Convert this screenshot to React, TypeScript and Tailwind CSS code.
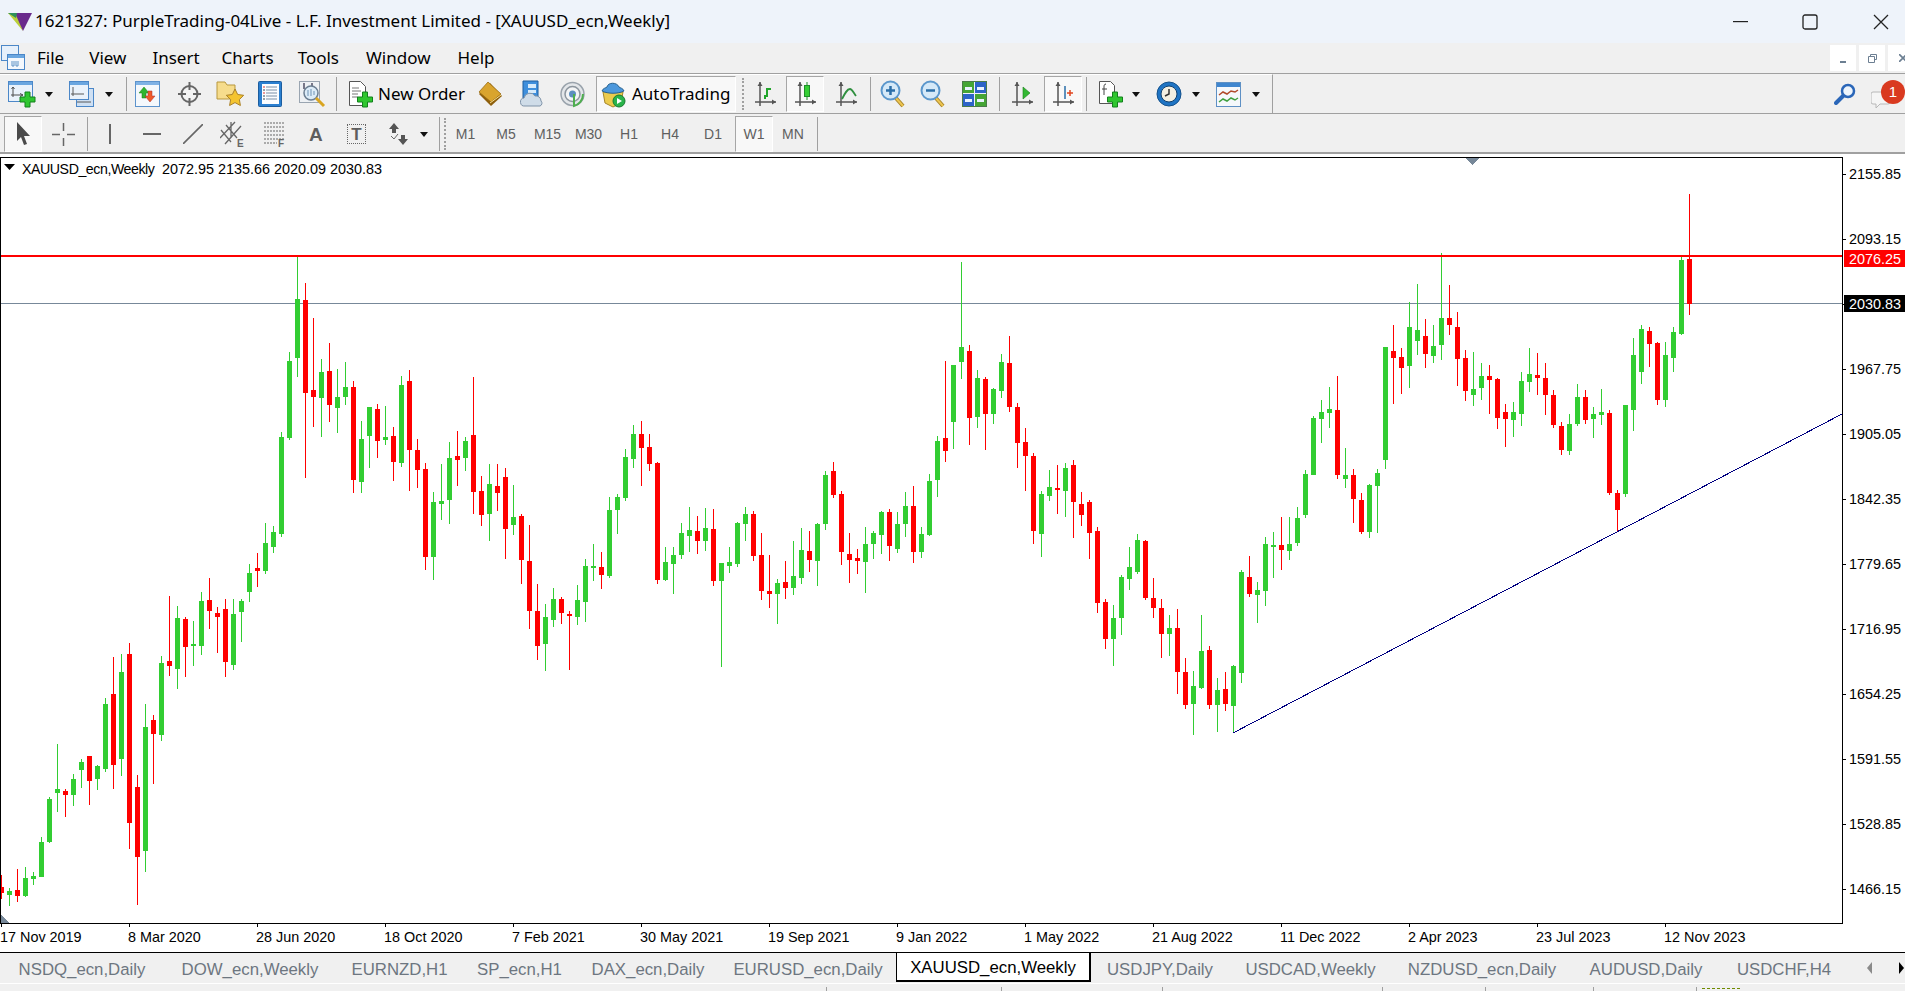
import React from 'react';

type Bar = [number, number, number, number, 'g' | 'r'];

// values are read off crops of the chart: page y = 230 + v / 3 once normalised below
const firstBars: Bar[] = [
    [1035, 1072, 1088, 1107, 'r'],
    [1075, 1083, 1095, 1128, 'g'], [1017, 1080, 1098, 1116, 'r'], [1011, 1044, 1098, 1101, 'g'], [1026, 1038, 1047, 1065, 'g'],
    [921, 936, 1041, 1041, 'g'], [801, 807, 936, 939, 'g'], [642, 777, 789, 846, 'g'], [777, 783, 795, 861, 'r'],
    [732, 747, 795, 828, 'g'], [687, 696, 720, 774, 'g'], [678, 678, 753, 825, 'r'], [705, 708, 747, 780, 'g'],
    [504, 522, 717, 726, 'g'], [381, 492, 705, 777, 'r'], [372, 426, 687, 738, 'g'], [339, 372, 879, 957, 'r'],
    [735, 771, 981, 1125, 'r'], [522, 591, 963, 1026, 'g'], [555, 570, 612, 762, 'r'], [378, 399, 615, 633, 'g'],
    [198, 393, 408, 438, 'r'], [228, 264, 417, 477, 'g'], [261, 267, 351, 441, 'r'], [273, 342, 348, 408, 'g'],
    [186, 213, 348, 375, 'g'], [144, 210, 243, 297, 'r'], [231, 249, 261, 369, 'r'], [207, 237, 396, 441, 'r'],
    [207, 252, 405, 420, 'g'], [207, 213, 246, 336, 'g'],
];
const midBars: Bar[] = [
    [1002, 1029, 1086, 1116, 'g'], [969, 1014, 1023, 1071, 'r'], [879, 939, 1023, 1032, 'g'], [888, 906, 951, 969, 'g'],
    [606, 621, 912, 921, 'g'], [366, 393, 624, 630, 'g'], [78, 207, 384, 441, 'g'], [159, 210, 489, 744, 'r'],
    [264, 480, 501, 591, 'r'], [387, 426, 504, 621, 'g'], [339, 423, 525, 576, 'r'], [417, 501, 534, 609, 'g'],
    [396, 471, 501, 525, 'g'], [453, 471, 750, 789, 'r'], [573, 627, 756, 789, 'g'], [531, 531, 618, 714, 'g'],
    [522, 537, 633, 684, 'r'], [528, 621, 630, 645, 'g'], [591, 618, 696, 753, 'r'], [438, 465, 699, 711, 'g'],
    [420, 453, 660, 783, 'r'], [627, 660, 720, 774, 'r'], [699, 717, 981, 1020, 'r'], [786, 816, 981, 1050, 'g'],
    [702, 813, 822, 870, 'g'], [636, 684, 810, 882, 'g'], [603, 678, 690, 768, 'r'], [621, 633, 684, 723, 'g'],
    [441, 615, 786, 852, 'r'], [738, 783, 855, 888, 'r'], [702, 762, 852, 933, 'g'], [702, 768, 789, 843, 'r'],
    [714, 741, 897, 987, 'r'], [765, 861, 885, 915, 'g'], [852, 858, 990, 1062, 'r'], [885, 993, 1143, 1197, 'r'],
    [1062, 1143, 1248, 1290, 'r'],
];
const secondBars: Bar[] = [
    [222, 261, 342, 423, 'g'], [174, 207, 270, 291, 'g'], [201, 207, 249, 282, 'r'], [243, 252, 255, 420, 'r'],
    [165, 210, 261, 285, 'g'], [87, 108, 216, 276, 'g'], [42, 108, 111, 153, 'g'], [66, 111, 135, 177, 'r'],
];
const lateBars: Bar[] = [
    [801, 840, 1038, 1044, 'g'], [792, 801, 840, 912, 'g'], [657, 681, 804, 813, 'g'], [585, 612, 687, 714, 'g'],
];
// this stretch came from a taller crop, scale 2.958 instead of 3
const restBars: Bar[] = [
    [565, 604, 645, 757, 'r'], [604, 642, 692, 714, 'r'], [686, 689, 1035, 1047, 'r'], [938, 982, 1035, 1038, 'g'],
    [938, 962, 988, 1077, 'g'], [867, 896, 962, 974, 'g'], [820, 888, 905, 953, 'g'], [846, 891, 920, 959, 'r'],
    [822, 882, 920, 950, 'g'], [825, 885, 1038, 1053, 'r'], [985, 985, 1038, 1293, 'g'], [938, 982, 994, 1015, 'g'],
    [864, 867, 988, 997, 'g'], [820, 840, 870, 920, 'g'], [831, 840, 964, 979, 'r'], [896, 962, 1068, 1095, 'r'],
    [962, 1068, 1077, 1118, 'r'], [1033, 1044, 1077, 1166, 'g'], [979, 1041, 1059, 1092, 'r'], [920, 1024, 1059, 1080, 'g'],
    [882, 947, 1030, 1047, 'g'], [891, 950, 976, 1012, 'r'], [867, 870, 979, 1053, 'g'], [713, 725, 870, 888, 'g'],
    [686, 713, 784, 793, 'r'], [772, 781, 953, 991, 'r'], [896, 959, 976, 1044, 'r'], [944, 970, 979, 1018, 'r'],
    [879, 929, 982, 1074, 'g'], [891, 896, 929, 973, 'g'], [831, 834, 902, 959, 'g'], [825, 834, 935, 979, 'r'],
    [834, 870, 944, 956, 'g'], [775, 817, 870, 908, 'g'], [757, 817, 953, 985, 'r'], [879, 899, 953, 970, 'g'],
    [722, 743, 902, 905, 'g'], [609, 624, 740, 790, 'g'], [388, 615, 654, 686, 'r'], [399, 399, 568, 648, 'g'],
    [95, 346, 391, 441, 'g'], [340, 358, 556, 636, 'r'], [414, 438, 553, 586, 'g'], [435, 441, 544, 651, 'r'],
    [468, 470, 544, 574, 'g'], [367, 391, 476, 497, 'g'], [314, 393, 524, 538, 'r'], [513, 524, 630, 704, 'r'],
    [586, 627, 669, 772, 'r'], [660, 669, 891, 929, 'r'], [772, 781, 899, 967, 'g'], [710, 760, 787, 802, 'g'],
    [695, 763, 769, 840, 'r'], [689, 704, 772, 849, 'g'], [680, 695, 805, 911, 'r'], [775, 811, 843, 876, 'r'],
    [799, 805, 896, 973, 'r'], [879, 891, 1104, 1133, 'r'], [1092, 1101, 1210, 1240, 'r'], [1109, 1148, 1210, 1290, 'g'],
    [1021, 1027, 1148, 1198, 'g'], [938, 997, 1033, 1065, 'g'], [899, 917, 1012, 1018, 'g'], [917, 920, 1089, 1095, 'r'],
    [1030, 1089, 1118, 1148, 'r'], [1092, 1118, 1195, 1266, 'r'], [1139, 1177, 1195, 1260, 'g'], [1121, 1177, 1308, 1373, 'r'],
    [1266, 1308, 1405, 1417, 'r'], [1305, 1349, 1402, 1493, 'g'], [1139, 1246, 1355, 1358, 'g'], [1231, 1243, 1405, 1417, 'r'],
    [1325, 1361, 1405, 1485, 'g'], [1308, 1358, 1402, 1423, 'r'], [1287, 1290, 1408, 1487, 'g'], [1006, 1012, 1311, 1340, 'g'],
    [964, 1027, 1077, 1086, 'r'], [1041, 1065, 1080, 1163, 'g'], [908, 929, 1068, 1112, 'g'], [893, 932, 938, 1030, 'g'],
    [849, 932, 947, 1006, 'r'], [849, 929, 950, 976, 'g'], [820, 852, 926, 935, 'g'], [710, 722, 843, 852, 'g'],
    [550, 556, 725, 725, 'g'], [503, 538, 559, 630, 'g'], [464, 530, 541, 586, 'g'], [432, 533, 725, 737, 'r'],
    [645, 725, 737, 763, 'g'], [707, 725, 796, 867, 'r'], [778, 799, 893, 899, 'r'], [751, 754, 893, 911, 'g'],
    [707, 719, 757, 896, 'g'], [346, 346, 680, 707, 'g'], [281, 358, 379, 515, 'r'], [349, 376, 408, 485, 'r'],
    [213, 287, 402, 467, 'g'], [160, 296, 328, 370, 'g'], [263, 314, 367, 408, 'r'], [281, 343, 373, 393, 'g'],
    [68, 260, 340, 385, 'g'], [163, 260, 281, 311, 'r'], [243, 287, 382, 462, 'r'], [355, 379, 476, 506, 'r'],
    [361, 470, 488, 521, 'g'], [393, 432, 467, 503, 'g'], [399, 432, 444, 544, 'r'], [438, 441, 556, 589, 'r'],
    [515, 538, 559, 642, 'r'], [509, 538, 562, 612, 'g'], [420, 447, 544, 580, 'g'], [349, 426, 450, 479, 'g'],
    [364, 429, 438, 488, 'r'], [393, 438, 488, 547, 'r'], [473, 488, 577, 586, 'r'], [568, 580, 651, 666, 'r'],
    [544, 574, 654, 666, 'g'], [456, 494, 574, 580, 'g'], [473, 494, 562, 574, 'r'], [524, 544, 559, 615, 'g'],
    [470, 538, 547, 577, 'g'], [533, 541, 778, 784, 'r'], [769, 778, 828, 891, 'r'], [518, 518, 781, 790, 'g'],
    [320, 370, 533, 595, 'g'], [281, 293, 420, 456, 'g'], [287, 299, 337, 405, 'r'], [331, 334, 503, 518, 'r'],
    [331, 370, 503, 524, 'g'], [287, 302, 379, 420, 'g'], [80, 89, 308, 311, 'g'], [-107, 86, 218, 251, 'r'],
];

const shift = (b: Bar): Bar => [b[0] + 900, b[1] + 900, b[2] + 900, b[3] + 900, b[4]];
const rescale = (b: Bar): Bar => [(b[0] * 3) / 2.958, (b[1] * 3) / 2.958, (b[2] * 3) / 2.958, (b[3] * 3) / 2.958, b[4]];
const bars: Bar[] = [...firstBars.map(shift), ...midBars, ...secondBars.map(shift), ...lateBars, ...restBars.map(rescale)];
const py = (v: number) => Math.round(230 + v / 3);

const prices = ['2155.85', '2093.15', '2030.45', '1967.75', '1905.05', '1842.35', '1779.65', '1716.95', '1654.25', '1591.55', '1528.85', '1466.15'];
const dates = ['17 Nov 2019', '8 Mar 2020', '28 Jun 2020', '18 Oct 2020', '7 Feb 2021', '30 May 2021', '19 Sep 2021', '9 Jan 2022', '1 May 2022', '21 Aug 2022', '11 Dec 2022', '2 Apr 2023', '23 Jul 2023', '12 Nov 2023'];

type IconProps = { className?: string };

function Arrow({ className = '' }: IconProps) {
    return (
        <svg width="8" height="5" viewBox="0 0 8 5" className={`shrink-0 ${className}`}>
            <path d="M0 0h8L4 5z" fill="#111" />
        </svg>
    );
}

function Sep({ className = '' }: IconProps) {
    return <div className={`h-[34px] w-px shrink-0 bg-[#a0a0a0] ${className}`} />;
}

function Plus({ x, y }: { x: number; y: number }) {
    return (
        <path
            transform={`translate(${x} ${y})`}
            d="M5 0h5v5h5v5h-5v5H5v-5H0V5h5z"
            fill="#2fc62f"
            stroke="#12801c"
            strokeWidth="1"
        />
    );
}

function NewChartIcon({ className = '' }: IconProps) {
    return (
        <svg width="28" height="28" viewBox="0 0 28 28" className={`shrink-0 ${className}`}>
            <rect x="0.500" y="1.500" width="24" height="20" fill="#eaf2fb" stroke="#4b87c8" />
            <rect x="1" y="2" width="23" height="3" fill="#6aa6e0" />
            <path d="M5 7v10M3 15h12M3.500 9 5 7l1.500 2M12 13.500 15 15l-3 1.500" stroke="#4f4f4f" fill="none" />
            <Plus x={12} y={12} />
        </svg>
    );
}

function ProfilesIcon({ className = '' }: IconProps) {
    return (
        <svg width="25" height="28" viewBox="0 0 25 28" className={`shrink-0 ${className}`}>
            <rect x="7.500" y="8.500" width="17" height="18" fill="#cfe0f3" stroke="#4b87c8" />
            <rect x="0.500" y="1.500" width="19" height="18" fill="#eaf2fb" stroke="#4b87c8" />
            <rect x="1" y="2" width="18" height="3" fill="#6aa6e0" />
            <path d="M4 7v9M2 14h13M8 22h14" stroke="#5a5a5a" fill="none" />
        </svg>
    );
}

function MarketWatchIcon({ className = '' }: IconProps) {
    return (
        <svg width="25" height="28" viewBox="0 0 25 28" className={`shrink-0 ${className}`}>
            <rect x="0.500" y="1.500" width="24" height="25" fill="#f4f8fc" stroke="#5c93cc" />
            <rect x="1" y="2" width="23" height="3" fill="#7fb2e5" />
            <path d="M9 7l5 6h-3v5H7v-5H4z" fill="#2fb52f" stroke="#1a7d1a" strokeWidth="0.500" />
            <path d="M15 22l-5-6h3v-5h4v5h3z" fill="#ef5a2a" stroke="#a33" strokeWidth="0.500" />
        </svg>
    );
}

function NavigatorIcon({ className = '' }: IconProps) {
    return (
        <svg width="23" height="26" viewBox="0 0 23 26" className={`shrink-0 ${className}`}>
            <circle cx="11.500" cy="13" r="8" fill="#f4f4f4" stroke="#666" strokeWidth="2" />
            <path d="M11.500 1v8M11.500 17v8M0 13h8M15 13h8" stroke="#666" strokeWidth="2" />
        </svg>
    );
}

function FavoritesIcon({ className = '' }: IconProps) {
    return (
        <svg width="28" height="28" viewBox="0 0 28 28" className={`shrink-0 ${className}`}>
            <path d="M1 2h8l2 3h8v14H1z" fill="#f6dc8c" stroke="#b8973d" />
            <path d="M19 9l2.700 5.500 6 .8-4.300 4.200 1 6-5.400-2.900-5.400 2.900 1-6-4.300-4.200 6-.8z" fill="#f4c430" stroke="#a9812a" />
        </svg>
    );
}

function TerminalIcon({ className = '' }: IconProps) {
    return (
        <svg width="24" height="28" viewBox="0 0 24 28" className={`shrink-0 ${className}`}>
            <rect x="0.500" y="1.500" width="23" height="25" rx="1" fill="#2a7fd0" stroke="#1c5d9e" />
            <rect x="4" y="4" width="17" height="20" fill="#fbfdff" />
            <path d="M8 7h11M8 10h11M8 13h11M8 16h11M8 19h11" stroke="#7b8fa6" />
            <path d="M5 7h2M5 13h2" stroke="#d33" />
            <path d="M5 10h2M5 16h2M5 19h2" stroke="#345" />
        </svg>
    );
}

function TesterIcon({ className = '' }: IconProps) {
    return (
        <svg width="28" height="28" viewBox="0 0 28 28" className={`shrink-0 ${className}`}>
            <rect x="0.500" y="1.500" width="20" height="21" fill="#eef1f4" stroke="#9aa5b1" />
            <path d="M5 3v6M13 3v6" stroke="#778" strokeWidth="2" />
            <circle cx="12" cy="13" r="7" fill="#dcecf8" stroke="#6c7f92" strokeWidth="1.500" />
            <path d="M9 10v6M12 9v7M15 11v4" stroke="#6f93b5" />
            <path d="M17 18l8 8" stroke="#d9a520" strokeWidth="3" />
        </svg>
    );
}

function OrderIcon({ className = '' }: IconProps) {
    return (
        <svg width="25" height="28" viewBox="0 0 25 28" className={`shrink-0 ${className}`}>
            <path d="M1.500 1.500h11l5 5v19h-16z" fill="#fff" stroke="#555" />
            <path d="M4 8h7M4 11h9M4 14h6M4 17h6" stroke="#777" />
            <Plus x={9.500} y={12} />
        </svg>
    );
}

function BookIcon({ className = '' }: IconProps) {
    return (
        <svg width="25" height="26" viewBox="0 0 25 26" className={`shrink-0 ${className}`}>
            <path d="M1 13 12 2l12 13-11 10z" fill="#8d5f0c" />
            <path d="M1 11 10 1l13 12-10 8z" fill="#d9a42e" stroke="#9a6d14" strokeWidth="0.800" />
            <path d="M12 22 23 14" stroke="#f6dd92" />
        </svg>
    );
}

function CloudMarketIcon({ className = '' }: IconProps) {
    return (
        <svg width="25" height="28" viewBox="0 0 25 28" className={`shrink-0 ${className}`}>
            <path d="M4 1h15v17H4z" fill="#3f8fdc" stroke="#1f5f9f" />
            <path d="M9 4h8v4H9zM9 10h8v3H9z" fill="#d7ebfb" />
            <path d="M6 26a4 4 0 0 1-1-8 6 6 0 0 1 11-2 5 5 0 0 1 6 5 3 3 0 0 1-1 5z" fill="#cfdce8" stroke="#7f93a8" />
        </svg>
    );
}

function SignalIcon({ className = '' }: IconProps) {
    return (
        <svg width="25" height="28" viewBox="0 0 25 28" className={`shrink-0 ${className}`}>
            <circle cx="12.500" cy="14" r="11.500" fill="#e3e6e9" stroke="#9aa3ac" strokeWidth="1.500" />
            <circle cx="12.500" cy="14" r="7.500" fill="#f3f4f5" stroke="#8c959e" strokeWidth="1.500" />
            <circle cx="12.500" cy="14" r="3.500" fill="#5d8fc0" />
            <path d="M14 14v12c5-1 9-6 9-12" fill="none" stroke="#4fae4f" strokeWidth="2" />
        </svg>
    );
}

function RobotIcon({ className = '' }: IconProps) {
    return (
        <svg width="26" height="28" viewBox="0 0 26 28" className={`shrink-0 ${className}`}>
            <path d="M3 12h20l-2 11-8 4-8-4z" fill="#eccb4d" stroke="#a5862a" />
            <path d="M2 11c1-3 4-3 5-4 1-5 10-5 12 0 1 1 4 1 5 4-6 3-16 3-22 0z" fill="#4d98dc" stroke="#28628f" />
            <circle cx="19" cy="21" r="6" fill="#29b44a" stroke="#1a7a30" />
            <path d="M17 18l5 3-5 3z" fill="#fff" />
        </svg>
    );
}

function ChartIcon({ className = '', children }: IconProps & { children?: React.ReactNode }) {
    return (
        <svg width="21" height="26" viewBox="0 0 21 26" className={`shrink-0 ${className}`}>
            <path d="M5 1v24M0 21h21" stroke="#555" strokeWidth="1.500" fill="none" />
            <path d="M2.500 5 5 1l2.500 4z M17 18.500 21 21l-4 2.500z" fill="#555" />
            {children}
        </svg>
    );
}

function Magnifier({ className = '', minus }: IconProps & { minus?: boolean }) {
    return (
        <svg width="26" height="28" viewBox="0 0 26 28" className={`shrink-0 ${className}`}>
            <path d="M15 17l8 9" stroke="#a8842a" strokeWidth="4" />
            <path d="M15 17l8 9" stroke="#edc550" strokeWidth="2" />
            <circle cx="10.500" cy="10.500" r="9" fill="#d5e9f8" stroke="#5b97cc" strokeWidth="2" />
            <path d={minus ? 'M6 10.500h9' : 'M6 10.500h9M10.500 6v9'} stroke="#2a6ea8" strokeWidth="2.500" />
        </svg>
    );
}

function TileIcon({ className = '' }: IconProps) {
    return (
        <svg width="25" height="28" viewBox="0 0 25 28" className={`shrink-0 ${className}`}>
            <rect x="0.500" y="1.500" width="24" height="25" fill="#eef" stroke="#4a7c4a" />
            <rect x="1" y="2" width="11" height="11" fill="#45a535" />
            <rect x="13" y="2" width="11" height="11" fill="#2c64c8" />
            <rect x="1" y="14" width="11" height="12" fill="#2c64c8" />
            <rect x="13" y="14" width="11" height="12" fill="#45a535" />
            <path d="M3 7h7v3H3zM15 7h7v3h-7zM3 19h7v3H3zM15 19h7v3h-7z" fill="#e9f2ff" />
        </svg>
    );
}

function IndicatorIcon({ className = '' }: IconProps) {
    return (
        <svg width="25" height="28" viewBox="0 0 25 28" className={`shrink-0 ${className}`}>
            <path d="M1.500 1.500h11l4 4v18h-15z" fill="#fff" stroke="#555" />
            <path d="M8 4c-2 0-2 2-2 3v8M4 9h5" stroke="#444" fill="none" />
            <Plus x={9.500} y={12} />
        </svg>
    );
}

function ClockIcon({ className = '' }: IconProps) {
    return (
        <svg width="26" height="28" viewBox="0 0 26 28" className={`shrink-0 ${className}`}>
            <circle cx="13" cy="14" r="12" fill="#1f74c4" stroke="#15528c" />
            <circle cx="13" cy="14" r="8" fill="#f3efe2" stroke="#0e3f6e" />
            <path d="M13 9v5l-4 2" stroke="#333" strokeWidth="1.500" fill="none" />
        </svg>
    );
}

function TemplateIcon({ className = '' }: IconProps) {
    return (
        <svg width="25" height="28" viewBox="0 0 25 28" className={`shrink-0 ${className}`}>
            <rect x="0.500" y="2.500" width="24" height="24" fill="#f5f8fb" stroke="#5e90c4" />
            <rect x="1" y="3" width="23" height="4" fill="#3f86cf" />
            <path d="M3 15l4-3 4 2 4-3 4 1 3-2" stroke="#b04a2a" fill="none" strokeWidth="1.500" />
            <path d="M3 22l4-3 4 2 4-3 4 2 3-2" stroke="#3fa03f" fill="none" strokeWidth="1.500" />
        </svg>
    );
}

function Chart() {
    return (
        <svg width="1841" height="765" viewBox="1 158 1841 765" shapeRendering="crispEdges" className="block">
            <rect x="1" y="303" width="1841" height="1" fill="#778899" />
            {bars.map((b, i) => {
                const [hi, top, bot, lo, c] = b;
                const fill = c === 'g' ? '#32cd32' : '#ff0000';
                const x = 1 + 8 * i;
                const y1 = py(top);
                const y2 = py(bot);
                return (
                    <g key={i} fill={fill}>
                        <rect x={x} y={py(hi)} width="1" height={py(lo) - py(hi)} />
                        <rect x={x - 2} y={y1} width="5" height={Math.max(y2 - y1, 2)} />
                    </g>
                );
            })}
            <rect x="1" y="255" width="1841" height="2" fill="#ff0000" />
            <line x1="1233" y1="733" x2="1842" y2="414" stroke="#000080" strokeWidth="1" />
            <path d="M1465 158h14l-7 7z" fill="#778899" />
            <path d="M1 915l8 8H1z" fill="#778899" />
            <path d="M4 164h11l-5.500 6z" fill="#000" shapeRendering="auto" />
        </svg>
    );
}

const tabs = [
    { label: 'NSDQ_ecn,Daily', w: 'w-[164px]' },
    { label: 'DOW_ecn,Weekly', w: 'w-[172px]' },
    { label: 'EURNZD,H1', w: 'w-[127px]' },
    { label: 'SP_ecn,H1', w: 'w-[113px]' },
    { label: 'DAX_ecn,Daily', w: 'w-[144px]' },
    { label: 'EURUSD_ecn,Daily', w: 'w-[176px]' },
    { label: 'XAUUSD_ecn,Weekly', w: 'w-[195px]', active: true },
    { label: 'USDJPY,Daily', w: 'w-[138px]' },
    { label: 'USDCAD,Weekly', w: 'w-[163px]' },
    { label: 'NZDUSD_ecn,Daily', w: 'w-[180px]' },
    { label: 'AUDUSD,Daily', w: 'w-[148px]' },
    { label: 'USDCHF,H4', w: 'w-[128px]' },
];

export default function App() {
    return (
        <div className="flex h-screen w-full flex-col overflow-hidden bg-[#f0f0f0] font-['Noto_Sans',sans-serif] text-black">
            {/* Title bar */}
            <div className="flex h-[43px] shrink-0 items-center bg-[#eef3fa]">
                <svg width="24" height="20" viewBox="0 0 24 20" className="ml-[8px] shrink-0">
                    <path d="M0 1h9l6 18z" fill="#b9cf3a" />
                    <path d="M7 1h17l-9 18z" fill="#6a2a8c" />
                    <path d="M0 1h9l-1 5z" fill="#2f8f5a" />
                </svg>
                <span className="ml-[3px] mb-[2px] text-[17px] leading-none">1621327: PurpleTrading-04Live - L.F. Investment Limited - [XAUUSD_ecn,Weekly]</span>
                <svg width="15" height="2" viewBox="0 0 15 2" className="ml-auto">
                    <rect width="15" height="1.200" fill="#222" />
                </svg>
                <svg width="16" height="16" viewBox="0 0 16 16" className="ml-[54px]">
                    <rect x="1" y="1" width="14" height="14" rx="2" fill="none" stroke="#222" strokeWidth="1.300" />
                </svg>
                <svg width="16" height="16" viewBox="0 0 16 16" className="ml-[55px] mr-[16px]">
                    <path d="M1 1l14 14M15 1 1 15" stroke="#222" strokeWidth="1.300" />
                </svg>
            </div>

            {/* Menu bar */}
            <div className="flex h-[30px] shrink-0 items-center">
                <svg width="24" height="26" viewBox="0 0 24 26" className="ml-[1px] shrink-0">
                    <rect x="0.500" y="0.500" width="17" height="15" fill="#e6f0fb" stroke="#4b87c8" />
                    <rect x="6.500" y="9.500" width="17" height="15" fill="#f4f8fd" stroke="#4b87c8" />
                    <rect x="7" y="10" width="16" height="3" fill="#6aa6e0" />
                    <path d="M11 16v5h2v-5M15 16v5h2v-5" stroke="#5f93c6" fill="none" />
                </svg>
                <span className="ml-[12px] text-[17px]">File</span>
                <span className="ml-[25px] text-[17px]">View</span>
                <span className="ml-[26px] text-[17px]">Insert</span>
                <span className="ml-[22px] text-[17px]">Charts</span>
                <span className="ml-[24px] text-[17px]">Tools</span>
                <span className="ml-[27px] text-[17px]">Window</span>
                <span className="ml-[27px] text-[17px]">Help</span>
                <div className="ml-auto flex items-center gap-[3px] self-start pt-[2px]">
                    <div className="flex h-[26px] w-[26px] items-end justify-center bg-white pb-[8px]">
                        <div className="h-[2px] w-[6px] bg-[#6c7f92]" />
                    </div>
                    <div className="flex h-[26px] w-[26px] items-center justify-center bg-white">
                        <svg width="9" height="9" viewBox="0 0 9 9">
                            <path d="M2.500 2.500v-2h6v5h-2M.5 2.500h6v6h-6z" fill="none" stroke="#6c7f92" />
                        </svg>
                    </div>
                    <div className="flex h-[26px] w-[17px] items-center justify-start bg-white pl-[11px]">
                        <svg width="8" height="8" viewBox="0 0 8 8" className="shrink-0">
                            <path d="M0 0l8 8M8 0 0 8" stroke="#6c7f92" strokeWidth="1.600" />
                        </svg>
                    </div>
                </div>
            </div>

            {/* Main toolbar */}
            <div className="flex h-[41px] shrink-0 items-center border-t border-b border-t-[#a0a0a0] border-b-[#a0a0a0] bg-[#f0f0f0]">
                <div className="flex h-full w-[1273px] shrink-0 items-center border-r border-[#a0a0a0] border-t border-t-white">
                    <NewChartIcon className="ml-[8px]" />
                    <Arrow className="ml-[9px]" />
                    <ProfilesIcon className="ml-[16px]" />
                    <Arrow className="ml-[11px]" />
                    <Sep className="ml-[13px]" />
                    <MarketWatchIcon className="ml-[8px]" />
                    <NavigatorIcon className="ml-[18px]" />
                    <FavoritesIcon className="ml-[15px]" />
                    <TerminalIcon className="ml-[14px]" />
                    <TesterIcon className="ml-[17px]" />
                    <Sep className="ml-[9px]" />
                    <OrderIcon className="ml-[11px]" />
                    <span className="ml-[5px] w-[87px] shrink-0 text-[17px] whitespace-nowrap">New Order</span>
                    <BookIcon className="ml-[13px]" />
                    <CloudMarketIcon className="ml-[16px]" />
                    <SignalIcon className="ml-[16px]" />
                    <div className="ml-[11px] flex h-[36px] w-[140px] shrink-0 items-center border border-t-[#a6a6a6] border-l-[#a6a6a6] border-r-white border-b-white bg-[#f8f8f8]">
                        <RobotIcon className="ml-[3px]" />
                        <span className="ml-[6px] text-[17px] whitespace-nowrap">AutoTrading</span>
                    </div>
                    <div className="ml-[6px] h-[32px] w-[2px] shrink-0 border-l-2 border-dotted border-[#a0a0a0]" />
                    <ChartIcon className="ml-[11px]">
                        <path d="M10 18v-3h2V8h4" stroke="#22a52c" strokeWidth="2" fill="none" />
                    </ChartIcon>
                    <div className="ml-[10px] flex h-[36px] w-[38px] shrink-0 items-center justify-center border border-t-[#a6a6a6] border-l-[#a6a6a6] border-r-white border-b-white bg-[#f8f8f8]">
                        <ChartIcon>
                            <path d="M12 1v4M12 16v3" stroke="#1f8f2a" />
                            <rect x="9.500" y="4.500" width="5" height="11" fill="#35d035" stroke="#1f8f2a" />
                        </ChartIcon>
                    </div>
                    <ChartIcon className="ml-[12px]">
                        <path d="M6 18c3-6 5-10 8-10 2 0 3 3 6 7" stroke="#2f8f3f" strokeWidth="1.800" fill="none" />
                    </ChartIcon>
                    <Sep className="ml-[13px]" />
                    <Magnifier className="ml-[9px]" />
                    <Magnifier minus className="ml-[14px]" />
                    <TileIcon className="ml-[16px]" />
                    <Sep className="ml-[12px]" />
                    <ChartIcon className="ml-[12px]">
                        <path d="M11 6l7 6-7 6z" fill="#33b833" stroke="#1a7d1a" strokeWidth="0.600" />
                    </ChartIcon>
                    <div className="ml-[11px] flex h-[36px] w-[38px] shrink-0 items-center justify-center border border-t-[#a6a6a6] border-l-[#a6a6a6] border-r-white border-b-white bg-[#f8f8f8]">
                        <ChartIcon>
                            <path d="M12 5v13" stroke="#2a6ea8" strokeWidth="1.500" />
                            <path d="M14 12h6M17 9v6" stroke="#e0451f" strokeWidth="1.500" />
                        </ChartIcon>
                    </div>
                    <Sep className="ml-[4px]" />
                    <IndicatorIcon className="ml-[11px]" />
                    <Arrow className="ml-[9px]" />
                    <ClockIcon className="ml-[16px]" />
                    <Arrow className="ml-[10px]" />
                    <TemplateIcon className="ml-[16px]" />
                    <Arrow className="ml-[11px]" />
                </div>
                <div className="flex-1" />
                <svg width="22" height="22" viewBox="0 0 22 22" className="mr-[19px] shrink-0">
                    <path d="M10 12l-8 8" stroke="#2a66b8" strokeWidth="4" strokeLinecap="round" />
                    <circle cx="14" cy="8" r="6" fill="#eef5fc" stroke="#2a66b8" strokeWidth="2.500" />
                </svg>
                <div className="relative h-[30px] w-[30px] shrink-0">
                    <svg width="20" height="20" viewBox="0 0 20 20" className="absolute top-[11px] left-[-4px]">
                        <path d="M2 2h15a2 2 0 0 1 2 2v8a2 2 0 0 1-2 2H9l-4 4v-4H2a2 2 0 0 1-2-2V4a2 2 0 0 1 2-2z" fill="#f5f5f5" stroke="#b8b8b8" />
                    </svg>
                    <div className="absolute top-[1px] left-[6px] flex h-[24px] w-[24px] items-center justify-center rounded-full bg-[#d93a20] font-['Liberation_Sans',sans-serif] text-[15px] leading-none text-white">1</div>
                </div>
            </div>

            {/* Drawing / period toolbar */}
            <div className="flex h-[40px] shrink-0 items-center border-b-2 border-[#a0a0a0] pt-[2px]">
                <div className="ml-[4px] flex h-[36px] w-[38px] shrink-0 items-center justify-center border border-t-[#a6a6a6] border-l-[#a6a6a6] border-r-white border-b-white bg-[#f8f8f8]">
                    <svg width="15" height="24" viewBox="0 0 15 24">
                        <path d="M1 0v19l4-4 3 8 3-1-3-8h6z" fill="#4a4a4a" />
                    </svg>
                </div>
                <svg width="23" height="23" viewBox="0 0 23 23" className="ml-[10px] shrink-0">
                    <path d="M11.500 0v8M11.500 15v8M0 11.500h8M15 11.500h8" stroke="#666" strokeWidth="1.500" />
                </svg>
                <Sep className="ml-[12px]" />
                <div className="ml-[21px] h-[20px] w-[2px] shrink-0 bg-[#666]" />
                <div className="ml-[32px] h-[2px] w-[18px] shrink-0 bg-[#666]" />
                <svg width="20" height="20" viewBox="0 0 20 20" className="ml-[22px] shrink-0">
                    <path d="M0 20 20 0" stroke="#666" strokeWidth="1.600" />
                </svg>
                <svg width="28" height="32" viewBox="0 0 28 32" className="ml-[17px] shrink-0">
                    <path d="M0 20 15 4M5 26 21 8M1 12l10 12M6 7l11 13M11 4v16" stroke="#666" strokeWidth="1.300" fill="none" />
                    <text x="17" y="29" fontSize="10" fontWeight="700" fontFamily="'Liberation Sans', sans-serif" fill="#666">E</text>
                </svg>
                <svg width="24" height="32" viewBox="0 0 24 32" className="ml-[16px] shrink-0">
                    <path d="M0 5h21M0 9h21M0 13h21M0 17h21M0 21h21M0 25h13" stroke="#666" strokeWidth="1" strokeDasharray="2 1" />
                    <text x="14" y="29" fontSize="10" fontWeight="700" fontFamily="'Liberation Sans', sans-serif" fill="#666">F</text>
                </svg>
                <span className="ml-[21px] w-[13px] shrink-0 font-['Liberation_Sans',sans-serif] text-[19px] leading-none font-bold text-[#5e5e5e]">A</span>
                <div className="ml-[25px] flex h-[20px] w-[19px] shrink-0 items-center justify-center border border-dotted border-[#666] font-['Liberation_Sans',sans-serif] text-[17px] leading-none font-bold text-[#5e5e5e]">T</div>
                <svg width="21" height="22" viewBox="0 0 21 22" className="ml-[22px] shrink-0">
                    <path d="M6 0 1 6h3v4h4V6h3z" fill="#555" />
                    <path d="M15 22l5-6h-3v-4h-4v4h-3z" fill="#555" />
                    <path d="M3 13l3 3 4-5" stroke="#666" fill="none" />
                </svg>
                <Arrow className="ml-[11px]" />
                <Sep className="ml-[11px]" />
                <div className="ml-[4px] h-[32px] w-[2px] shrink-0 border-l-2 border-dotted border-[#a0a0a0]" />
                <div className="flex h-full items-center font-['Liberation_Sans',sans-serif] text-[14px] text-[#5f5f5f]">
                    <span className="w-[39px] text-center">M1</span>
                    <span className="w-[42px] text-center">M5</span>
                    <span className="w-[41px] text-center">M15</span>
                    <span className="w-[41px] text-center">M30</span>
                    <span className="w-[40px] text-center">H1</span>
                    <span className="w-[42px] text-center">H4</span>
                    <span className="w-[44px] text-center">D1</span>
                    <span className="flex h-[36px] w-[38px] items-center justify-center border border-t-[#a6a6a6] border-l-[#a6a6a6] border-r-white border-b-white bg-[#f8f8f8]">W1</span>
                    <span className="w-[40px] text-center">MN</span>
                </div>
                <Sep className="ml-[4px]" />
            </div>

            {/* Chart + axes */}
            <div className="flex-1 bg-white pt-[3px] font-['Liberation_Sans',sans-serif]">
                <div className="relative flex items-start">
                    <div className="relative border border-black">
                        <Chart />
                        <span className="absolute top-[2px] left-[21px] flex leading-[18px] whitespace-nowrap">
                            <span className="w-[140px] text-[14.200px] tracking-[-0.450px]">XAUUSD_ecn,Weekly</span>
                            <span className="text-[14.400px]">2072.95 2135.66 2020.09 2030.83</span>
                        </span>
                    </div>
                    <div className="flex flex-col pt-[8px]">
                        {prices.map((p) => (
                            <div key={p} className="flex h-[65px] items-start last:h-[18px]">
                                <div className="mt-[9px] h-px w-[3px] bg-black" />
                                <span className="ml-[3px] text-[14.400px] leading-[18px]">{p}</span>
                            </div>
                        ))}
                    </div>
                    <div className="absolute top-[93px] left-[1844px] h-[17px] w-[61px] bg-[#ff0000] pl-[5px] text-[14.400px] leading-[18px] text-white">2076.25</div>
                    <div className="absolute top-[138px] left-[1844px] h-[17px] w-[61px] bg-black pl-[5px] text-[14.400px] leading-[18px] text-white">2030.83</div>
                </div>
                <div className="flex pl-px">
                    {dates.map((d) => (
                        <div key={d} className="w-[128px] shrink-0">
                            <div className="h-[3px] w-px bg-black" />
                            <div className="-ml-px text-[14.400px] leading-[20px] whitespace-nowrap">{d}</div>
                        </div>
                    ))}
                </div>
            </div>

            {/* Chart tabs */}
            <div className="flex h-[31px] shrink-0 items-stretch border-t border-black bg-[#f0f0f0] font-['Liberation_Sans',sans-serif] text-[16.800px]">
                {tabs.map((t) => (
                    <div key={t.label} className={`flex shrink-0 items-center justify-center pt-[3px] ${t.w} ${t.active ? 'mb-[1px] border-r-2 border-b-2 border-l border-black bg-white text-black' : 'text-[#6d7680]'}`}>
                        <span className="whitespace-nowrap">{t.label}</span>
                    </div>
                ))}
                <svg width="58" height="30" viewBox="0 0 58 30" className="shrink-0">
                    <path d="M24 9l-5 6 5 6z" fill="#8a8a8a" />
                    <path d="M51 9l5 6-5 6z" fill="#000" />
                </svg>
            </div>

            {/* Status bar */}
            <div className="flex h-[8px] shrink-0 items-end border-t border-white">
                <div className="h-[4px] w-[827px] shrink-0 border-r border-[#a0a0a0]" />
                <div className="h-[4px] w-[175px] shrink-0 border-r border-[#a0a0a0]" />
                <div className="h-[4px] w-[161px] shrink-0 border-r border-[#a0a0a0]" />
                <div className="h-[4px] w-[220px] shrink-0 border-r border-[#a0a0a0]" />
                <div className="h-[4px] w-[103px] shrink-0 border-r border-[#a0a0a0]" />
                <div className="h-[4px] w-[108px] shrink-0 border-r border-[#a0a0a0]" />
                <div className="h-[4px] w-[103px] shrink-0 border-r border-[#a0a0a0]" />
                <div className="mb-[2px] ml-[5px] h-0 w-[38px] border-t border-dashed border-[#6f8a00]" />
            </div>
        </div>
    );
}
